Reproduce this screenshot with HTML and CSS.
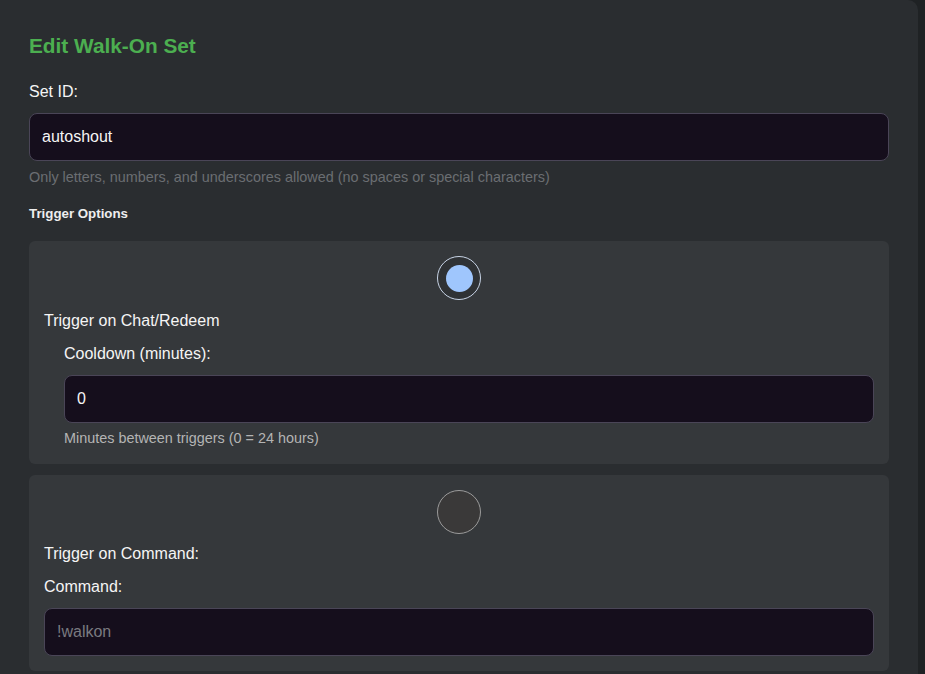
FILE: index.html
```html
<!DOCTYPE html>
<html lang="en">
<head>
<meta charset="utf-8">
<title>Edit Walk-On Set</title>
<link rel="stylesheet" href="styles.css">
</head>
<body>
<div class="panel">
  <h2 class="title">Edit Walk-On Set</h2>

  <label class="label" for="setid">Set ID:</label>
  <input class="field" id="setid" type="text" value="autoshout">
  <div class="hint">Only letters, numbers, and underscores allowed (no spaces or special characters)</div>

  <h4 class="section">Trigger Options</h4>

  <div class="card">
    <div class="radio-row"><span class="radio checked"></span></div>
    <div class="opt-label">Trigger on Chat/Redeem</div>
    <div class="indent">
      <label class="label sub" for="cooldown">Cooldown (minutes):</label>
      <input class="field" id="cooldown" type="text" value="0">
      <div class="hint light">Minutes between triggers (0 = 24 hours)</div>
    </div>
  </div>

  <div class="card second">
    <div class="radio-row"><span class="radio"></span></div>
    <div class="opt-label">Trigger on Command:</div>
    <label class="label sub" for="command">Command:</label>
    <input class="field" id="command" type="text" placeholder="!walkon">
  </div>
</div>
</body>
</html>
```

FILE: styles.css
```css
html, body {
  margin: 0;
  padding: 0;
  background: #1f2224;
  height: 100%;
  overflow: hidden;
}

body {
  font-family: "Liberation Sans", Arial, sans-serif;
  color: #f2f2f2;
}

.panel {
  width: 918px;
  height: 674px;
  box-sizing: border-box;
  background: #2a2d30;
  border-radius: 0 10px 0 0;
  padding: 34px 29px 0 29px;
  overflow: hidden;
}

.title {
  margin: 0;
  font-size: 20.8px;
  line-height: 24px;
  font-weight: bold;
  color: #4caf50;
}

.label {
  display: block;
  margin-top: 24px;
  font-size: 16px;
  line-height: 20px;
  color: #f5f5f5;
}

.field {
  display: block;
  width: 100%;
  box-sizing: border-box;
  margin-top: 11px;
  height: 48px;
  padding: 0 12px;
  font-family: "Liberation Sans", Arial, sans-serif;
  font-size: 16px;
  color: #f5f5f5;
  background: #150e1c;
  border: 1px solid #4a4557;
  border-radius: 8px;
  outline: none;
}

.field::placeholder {
  color: #7a7a80;
}

.hint {
  margin-top: 8px;
  font-size: 14.4px;
  line-height: 16px;
  color: #6b6e72;
}

.hint.light {
  margin-top: 7px;
  color: #b4b4b4;
}

.section {
  margin: 21px 0 0 0;
  font-size: 13.3px;
  line-height: 16px;
  font-weight: bold;
  color: #eeeeee;
}

.card {
  margin-top: 19px;
  background: #35383b;
  border-radius: 6px;
  padding: 15px 15px 18px 15px;
}

.card.second {
  margin-top: 11px;
  padding-bottom: 15px;
}

.radio-row {
  display: flex;
  justify-content: center;
}

.radio {
  width: 44px;
  height: 44px;
  box-sizing: border-box;
  border-radius: 50%;
  border: 1px solid #9b9b9b;
  background: #3a3939;
  display: flex;
  align-items: center;
  justify-content: center;
}

.radio.checked {
  border-color: #c8d4e6;
  background: #2f3235;
}

.radio.checked::after {
  content: "";
  width: 27px;
  height: 27px;
  border-radius: 50%;
  background: #9fc6fd;
}

.opt-label {
  margin-top: 11px;
  font-size: 16px;
  line-height: 20px;
  color: #f5f5f5;
}

.second .opt-label {
  margin-top: 10px;
}

.label.sub {
  margin-top: 13px;
}

.indent {
  margin-left: 20px;
}
```
